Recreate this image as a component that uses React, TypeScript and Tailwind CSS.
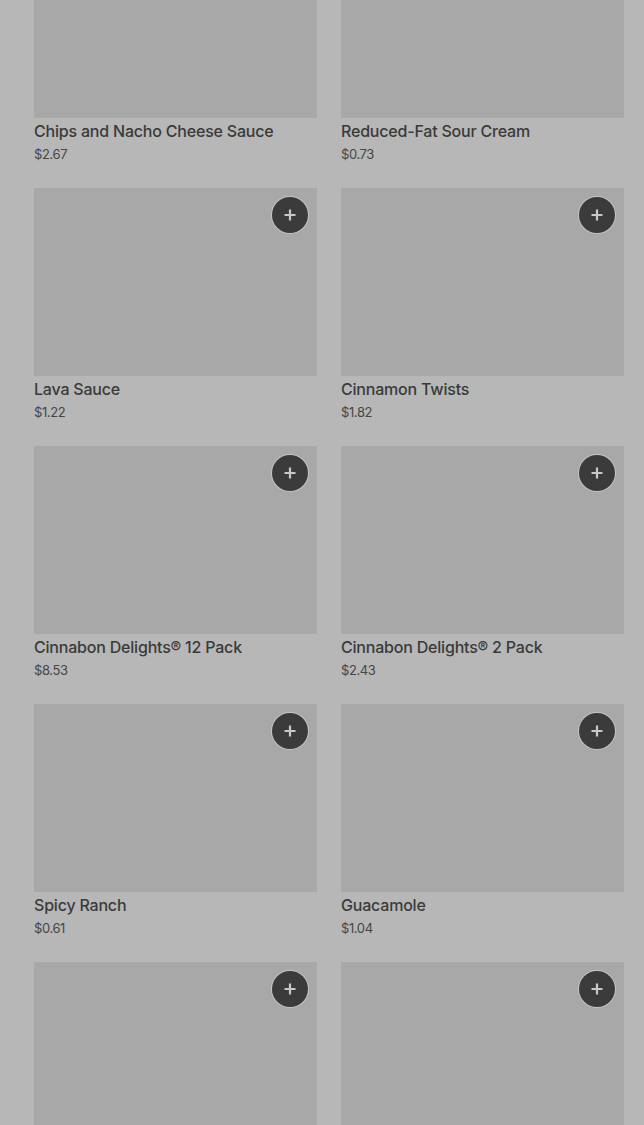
import React from "react";

const items = [
  { name: "Chips and Nacho Cheese Sauce", price: "$2.67", plus: false },
  { name: "Reduced-Fat Sour Cream", price: "$0.73", plus: false },
  { name: "Lava Sauce", price: "$1.22", plus: true },
  { name: "Cinnamon Twists", price: "$1.82", plus: true },
  { name: "Cinnabon Delights® 12 Pack", price: "$8.53", plus: true },
  { name: "Cinnabon Delights® 2 Pack", price: "$2.43", plus: true },
  { name: "Spicy Ranch", price: "$0.61", plus: true },
  { name: "Guacamole", price: "$1.04", plus: true },
  { name: "", price: "", plus: true },
  { name: "", price: "", plus: true },
];

function Plus() {
  return (
    <div className="absolute right-[9px] top-[9px] flex h-[36px] w-[36px] items-center justify-center rounded-full bg-[#3b3b3b] ring-1 ring-[#c4c4c4]">
      <svg width="14" height="14" viewBox="0 0 14 14">
        <path d="M7 1.5v11M1.5 7h11" stroke="#c8c8c8" strokeWidth="2.2" />
      </svg>
    </div>
  );
}

export default function App() {
  return (
    <div
      className="h-[1125px] w-[644px] overflow-hidden bg-[#b7b7b7]"
      style={{ fontFamily: "Inter, 'Noto Sans', sans-serif" }}
    >
      <div className="mt-[-70px] grid grid-cols-2 gap-x-6 gap-y-6 pl-[34px] pr-[20px]">
        {items.map((it, i) => (
          <div key={i} className="flex flex-col">
            <div className="relative h-[188px] bg-[#a8a8a8]">{it.plus && <Plus />}</div>
            {it.name && (
              <>
                <div className="mt-[1px] text-[16px] font-medium leading-6 tracking-[-0.2px] text-[#3a3a3a]">
                  {it.name}
                </div>
                <div className="mt-[1px] text-[13px] leading-5 tracking-[-0.4px] text-[#464646]">
                  {it.price}
                </div>
              </>
            )}
          </div>
        ))}
      </div>
    </div>
  );
}
